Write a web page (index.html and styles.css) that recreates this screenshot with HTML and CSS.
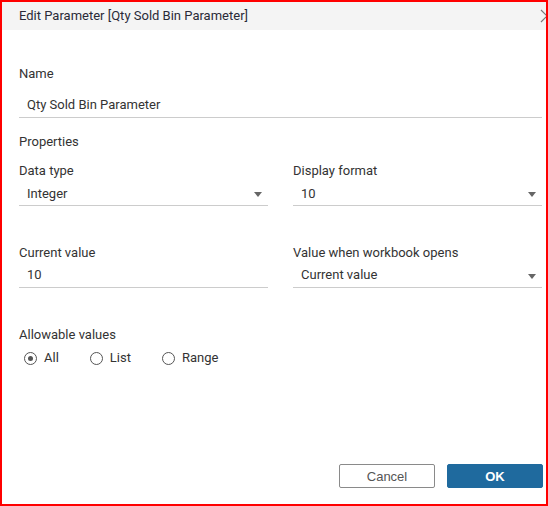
FILE: index.html
```html
<!DOCTYPE html>
<html>
<head>
<meta charset="utf-8">
<link rel="stylesheet" href="styles.css">
</head>
<body>
<div class="frame">
  <div class="dialog">
    <div class="header">
      <span class="title">Edit Parameter [Qty Sold Bin Parameter]</span>
      <svg class="close" width="14" height="14" viewBox="0 0 14 14"><path d="M1 1 L13 13 M13 1 L1 13" stroke="#777" stroke-width="1.2" fill="none"/></svg>
    </div>
    <div class="body">
      <div class="label name-label">Name</div>
      <div class="field name-field">Qty Sold Bin Parameter</div>

      <div class="label props">Properties</div>

      <div class="grid row1">
        <div class="col">
          <div class="label">Data type</div>
          <div class="field sel r1">Integer<span class="arrow"></span></div>
        </div>
        <div class="col">
          <div class="label">Display format</div>
          <div class="field sel r1">10<span class="arrow"></span></div>
        </div>
      </div>

      <div class="grid row2">
        <div class="col">
          <div class="label">Current value</div>
          <div class="field r2">10</div>
        </div>
        <div class="col">
          <div class="label">Value when workbook opens</div>
          <div class="field sel r2">Current value<span class="arrow"></span></div>
        </div>
      </div>

      <div class="label allow">Allowable values</div>
      <div class="radios">
        <label class="radio"><span class="circle checked"></span>All</label>
        <label class="radio"><span class="circle"></span>List</label>
        <label class="radio"><span class="circle"></span>Range</label>
      </div>
    </div>
    <div class="footer">
      <button class="btn cancel">Cancel</button>
      <button class="btn ok">OK</button>
    </div>
  </div>
</div>
</body>
</html>
```

FILE: styles.css
```css
html, body {
  margin: 0;
  padding: 0;
  background: #fff;
}
.frame {
  width: 548px;
  height: 506px;
  box-sizing: border-box;
  border: 2px solid #ff0000;
  overflow: hidden;
  position: relative;
}
.dialog {
  width: 544px;
  height: 502px;
  display: flex;
  flex-direction: column;
  font-family: Roboto, "Liberation Sans", sans-serif;
  font-size: 13px;
  color: #333;
  position: relative;
}
.header {
  height: 28px;
  background: #f4f4f4;
  padding-left: 17px;
  line-height: 28px;
  color: #2a2a38;
  position: relative;
}
.close {
  position: absolute;
  right: -8px;
  top: 7px;
}
.body {
  padding: 0 4px 0 17px;
  display: flex;
  flex-direction: column;
}
.label {
  line-height: 16px;
  height: 16px;
}
.name-label { margin-top: 36px; }
.field {
  line-height: 16px;
  border-bottom: 1px solid #cccccc;
  padding-left: 8px;
  position: relative;
}
.name-field { padding-top: 15px; padding-bottom: 4px; }
.props { margin-top: 16px; }
.grid {
  display: grid;
  grid-template-columns: 1fr 1fr;
  column-gap: 25px;
}
.row1 { margin-top: 13px; }
.row2 { margin-top: 39px; }
.r1 { padding-top: 7px; padding-bottom: 3px; }
.r2 { padding-top: 6px; padding-bottom: 4px; }
.arrow {
  position: absolute;
  right: 6px;
  top: 50%;
  width: 0;
  height: 0;
  border-left: 4px solid transparent;
  border-right: 4px solid transparent;
  border-top: 5px solid #666;
}
.allow { margin-top: 39px; }
.radios {
  margin-top: 7px;
  display: flex;
  padding-left: 5px;
  line-height: 16px;
}
.radio {
  display: flex;
  align-items: center;
  gap: 7px;
  margin-right: 31px;
}
.circle {
  width: 11px;
  height: 11px;
  border: 1px solid #555;
  border-radius: 50%;
  position: relative;
  box-sizing: content-box;
}
.circle.checked::after {
  content: "";
  position: absolute;
  left: 3px;
  top: 3px;
  width: 5px;
  height: 5px;
  border-radius: 50%;
  background: #555;
}
.footer {
  margin-top: auto;
  margin-bottom: 16px;
  display: flex;
  justify-content: flex-end;
  gap: 12px;
  padding-right: 3px;
}
.btn {
  width: 96px;
  height: 24px;
  font-family: "Liberation Sans", Arial, sans-serif;
  font-size: 13px;
  border-radius: 2px;
  padding: 0;
  box-sizing: border-box;
}
.cancel {
  background: #fff;
  border: 1px solid #8a8a8a;
  color: #555;
}
.ok {
  background: #1f6a9e;
  border: 1px solid #1f6a9e;
  color: #fff;
  font-weight: bold;
}
```
